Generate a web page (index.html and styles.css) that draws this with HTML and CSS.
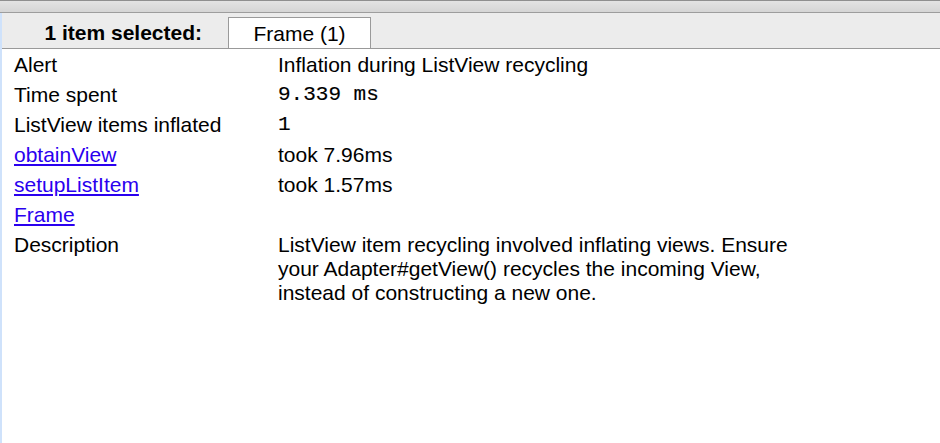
FILE: index.html
```html
<!DOCTYPE html>
<html>
<head>
<meta charset="utf-8">
<link rel="stylesheet" href="styles.css">
</head>
<body>
<div class="topbar"></div>
<div class="panel">
  <div class="tabstrip">
    <div class="sel-label">1 item selected:</div>
    <div class="tab">Frame (1)</div>
  </div>
  <div class="details">
    <div class="key">Alert</div>
    <div class="val">Inflation during ListView recycling</div>
    <div class="key">Time spent</div>
    <div class="val mono">9.339 ms</div>
    <div class="key">ListView items inflated</div>
    <div class="val mono">1</div>
    <div class="key"><a class="link" href="#">obtainView</a></div>
    <div class="val">took 7.96ms</div>
    <div class="key"><a class="link" href="#">setupListItem</a></div>
    <div class="val">took 1.57ms</div>
    <div class="key"><a class="link" href="#">Frame</a></div>
    <div class="val"></div>
    <div class="key">Description</div>
    <div class="val">ListView item recycling involved inflating views. Ensure your Adapter#getView() recycles the incoming View, instead of constructing a new one.</div>
  </div>
</div>
</body>
</html>
```
FILE: styles.css
```css
html, body {
  margin: 0;
  padding: 0;
  height: 100%;
  background: #ffffff;
}
body {
  font-family: "Liberation Sans", Arial, sans-serif;
  font-size: 21px;
  color: #000;
  display: flex;
  flex-direction: column;
}
.topbar {
  height: 11px;
  border-top: 1px solid #8f8f8f;
  border-bottom: 1px solid #9d9d9d;
  background: linear-gradient(#e3e3e3, #d5d5d5);
}
.panel {
  flex: 1;
  border-left: 2px solid #cfe2fb;
}
.tabstrip {
  display: flex;
  align-items: flex-end;
  height: 35px;
  background: #ececec;
  border-bottom: 1px solid #999999;
}
.sel-label {
  width: 226px;
  box-sizing: border-box;
  padding: 2px 26px 0 0;
  text-align: right;
  font-weight: bold;
  height: 32px;
  line-height: 30px;
}
.tab {
  width: 143px;
  height: 31px;
  box-sizing: border-box;
  padding-top: 1px;
  line-height: 30px;
  text-align: center;
  background: #ffffff;
  border: 1px solid #9a9a9a;
  border-bottom: none;
}
.details {
  display: grid;
  grid-template-columns: 264px 530px;
  padding-left: 12px;
}
.key, .val {
  line-height: 24px;
  padding: 4px 0 2px;
  min-height: 24px;
}
.mono {
  font-family: "Liberation Mono", "Courier New", monospace;
  -webkit-text-stroke: 0.15px #000;
}
.link {
  color: #2a00ef;
  text-decoration: underline;
}
```
